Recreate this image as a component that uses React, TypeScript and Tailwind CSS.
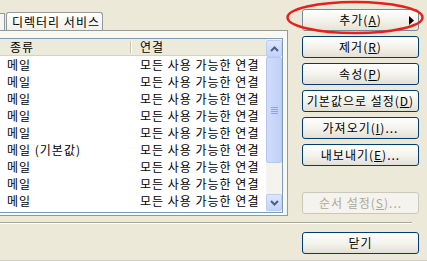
// App.tsx
// ================================================================
// ADDRESS BOOK / DIRECTORY SERVICES DIALOG (XP style)
// ================================================================
// Left: tab panel with list view (종류 / 연결) + scroll bar
// Right: command buttons, the first one circled in red
// ================================================================

import React from "react";
import clsx from "clsx";

const rows = [
  "메일",
  "메일",
  "메일",
  "메일",
  "메일",
  "메일 (기본값)",
  "메일",
  "메일",
  "메일",
];

interface XpButtonProps {
  children: React.ReactNode;
  disabled?: boolean;
  className?: string;
}

function XpButton({ children, disabled, className }: XpButtonProps) {
  return (
    <div
      className={clsx(
        "h-[22px] w-[117px] flex items-center justify-center rounded-[3px] border text-[12px] leading-none tracking-[1px] whitespace-nowrap",
        disabled
          ? "border-[#cac8bb] text-[#aca899] bg-[#f4f3ee]"
          : "border-[#003c74] text-black bg-linear-to-b from-white via-[#f4f3ee] to-[#e3e0d3]",
        className
      )}
    >
      {children}
    </div>
  );
}

function Chevron({ up }: { up?: boolean }) {
  return (
    <svg width="9" height="6" viewBox="0 0 9 6" aria-hidden="true">
      <path
        d={up ? "M1 5 L4.5 1.5 L8 5" : "M1 1 L4.5 4.5 L8 1"}
        fill="none"
        stroke="#4d6185"
        strokeWidth="2"
      />
    </svg>
  );
}

export default function App() {
  return (
    <div className="relative w-[427px] h-[261px] overflow-hidden bg-[#ece9d8] font-['Noto_Sans_CJK_KR','Noto_Sans',sans-serif] text-black border-b border-[#d4d0c8]">
      {/* ── Top area: tab panel + buttons ───────────────────── */}
      <div className="flex h-[222px]">
        {/* ── Tab panel ─────────────────────────────────────── */}
        <div className="w-[288px] flex flex-col">
          <div className="h-[30px] flex items-end">
            <div className="w-[5px] h-[17px] border-r border-t border-[#919b9c] bg-[#f6f6f2]" />
            <div className="ml-px w-[97px] h-[18px] border border-b-0 border-[#919b9c] rounded-t-[3px] bg-linear-to-b from-white to-[#f1f0ea] flex items-center pl-[5px] text-[12px] leading-none tracking-[1px] whitespace-nowrap">
              디렉터리 서비스
            </div>
          </div>
          <div className="h-[186px] border-t border-r border-b border-[#919b9c] bg-[#f8f8f5] pt-[7px] pr-[4px]">
            {/* ── List view ─────────────────────────────────── */}
            <div className="h-[175px] border-t border-r border-b border-[#7f9db9] bg-white flex">
              <div className="flex-1 min-w-0">
                <div className="h-[17px] flex items-center bg-[#ebeadb] border-b border-[#d6d2c2] text-[12px] leading-none tracking-[1px]">
                  <div className="w-[131px] pl-[10px] border-r border-[#c7c5b2] h-[12px] flex items-center">
                    종류
                  </div>
                  <div className="pl-[8px] border-l border-white h-[12px] flex items-center">
                    연결
                  </div>
                </div>
                {rows.map((r, i) => (
                  <div
                    key={i}
                    className="h-[17px] flex items-center text-[12px] leading-none tracking-[1px] whitespace-nowrap"
                  >
                    <div className="w-[140px] pl-[7px]">{r}</div>
                    <div>모든 사용 가능한 연결</div>
                  </div>
                ))}
              </div>
              {/* ── Scroll bar ─────────────────────────────── */}
              <div className="w-[16px] flex flex-col bg-[#f4f3ee] pt-px pb-px">
                <div className="h-[17px] rounded-[2px] border border-[#bccdf5] bg-linear-to-b from-[#dde6fc] to-[#c2d3fa] flex items-center justify-center">
                  <Chevron up />
                </div>
                <div className="h-[106px] rounded-[2px] border border-[#b4c7f3] bg-linear-to-r from-[#cfdcfb] to-[#c0d1f8] flex flex-col items-center justify-center gap-px">
                  <div className="w-[7px] h-px bg-[#8ea4dc]" />
                  <div className="w-[7px] h-px bg-[#8ea4dc]" />
                  <div className="w-[7px] h-px bg-[#8ea4dc]" />
                  <div className="w-[7px] h-px bg-[#8ea4dc]" />
                </div>
                <div className="flex-1" />
                <div className="h-[17px] rounded-[2px] border border-[#bccdf5] bg-linear-to-b from-[#dde6fc] to-[#c2d3fa] flex items-center justify-center">
                  <Chevron />
                </div>
              </div>
            </div>
          </div>
        </div>

        {/* ── Command buttons ───────────────────────────────── */}
        <div className="ml-[14px] pt-[9px] flex flex-col gap-[5px]">
          <XpButton className="border-[#7a8898] from-[#f6f5ef] to-[#e6e3d6]">
            추가(<span className="underline">A</span>)
          </XpButton>
          <XpButton>
            제거(<span className="underline">R</span>)
          </XpButton>
          <XpButton>
            속성(<span className="underline">P</span>)
          </XpButton>
          <XpButton>
            기본값으로 설정(<span className="underline">D</span>)
          </XpButton>
          <XpButton>
            가져오기(<span className="underline">I</span>)...
          </XpButton>
          <XpButton>
            내보내기(<span className="underline">E</span>)...
          </XpButton>
          <XpButton disabled className="mt-[21px]">
            순서 설정(<span className="underline">S</span>)...
          </XpButton>
        </div>
      </div>

      {/* ── Separator ───────────────────────────────────────── */}
      <div className="w-[412px] h-px bg-[#aca899]" />
      <div className="w-[412px] h-px bg-white" />

      {/* ── Close button ────────────────────────────────────── */}
      <div className="flex pl-[302px] pt-[8px]">
        <XpButton>닫기</XpButton>
      </div>

      {/* ── Red highlight ellipse + arrow ───────────────────── */}
      <svg
        className="absolute left-0 top-0 pointer-events-none"
        width="427"
        height="261"
        aria-hidden="true"
      >
        <ellipse
          cx="355"
          cy="17.5"
          rx="67.5"
          ry="15.5"
          fill="none"
          stroke="#e8201c"
          strokeWidth="2.5"
        />
        <polygon points="409,16 414,20.5 409,25" fill="#000" />
      </svg>
    </div>
  );
}
